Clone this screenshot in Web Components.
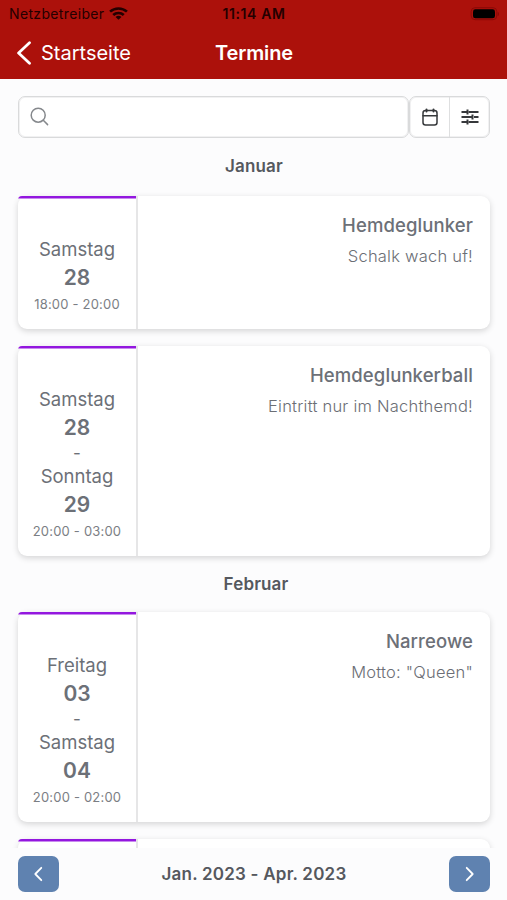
<!DOCTYPE html>
<html lang="de">
<head>
<meta charset="utf-8">
<meta name="viewport" content="width=device-width">
<title>Termine</title>
<style>
html,body{margin:0;height:100%;overflow:hidden;background:#fcfcfd}
body{font-family:Inter,"Liberation Sans",sans-serif;color:#6c7077}
</style>
</head>
<body>
<events-app></events-app>
<script>
const define=(name,html,init)=>{
  const t=document.createElement('template');t.innerHTML=html;
  customElements.define(name,class extends HTMLElement{
    constructor(){super();this.attachShadow({mode:'open'}).append(t.content.cloneNode(true));}
    connectedCallback(){if(init)init(this,this.shadowRoot);}
  });
};

define('status-bar',`<style>
:host{display:grid;grid-template-columns:1fr auto 1fr;align-items:center;height:27px;padding:0 8px 0 9px;color:#240000;font-size:14px;line-height:27px}
.left{display:flex;align-items:center;gap:5px;letter-spacing:.35px}
.time{font-weight:600;font-size:14px;letter-spacing:.6px}
.bat{justify-self:end;display:block}svg{display:block}
</style><div class="left"><span>Netzbetreiber</span>
<svg width="19" height="13" viewBox="0 0 18 13" preserveAspectRatio="none" fill="none" stroke="#240000" stroke-width="2.500"><path d="M1 4.700a11.600 11.600 0 0 1 16 0M4 8a7.300 7.300 0 0 1 10 0"/><path d="M6.200 9.900a4.200 4.200 0 0 1 5.600 0L9 12.800z" fill="#240000" stroke="none"/></svg></div>
<div class="time">11:14 AM</div>
<svg class="bat" width="29" height="14" viewBox="0 0 29 14"><rect x="1.200" y=".7" width="25.600" height="12" rx="3.800" fill="none" stroke="#8b0907" stroke-width="1"/><rect x="3" y="2.300" width="22" height="9" rx="2.400" fill="#000"/><path d="M27.800 5v4c1-.4 1.200-1.200 1.200-2s-.2-1.600-1.200-2z" fill="#8b0907"/></svg>`);

define('nav-bar',`<style>
:host{display:grid;grid-template-columns:1fr auto 1fr;align-items:center;height:52px;padding:0 16px;color:#fff;font-size:20px;line-height:52px}
.back{display:flex;align-items:center;gap:9px}
.title{font-weight:600;letter-spacing:-.15px;padding-left:1px}svg{display:block}
</style><div class="back"><svg width="16" height="24" viewBox="0 0 16 24" fill="none" stroke="#fff" stroke-width="2.800" stroke-linecap="round" stroke-linejoin="round"><path d="M13.500 1.800 2.600 12l10.900 10.200"/></svg><span><slot name="back"></slot></span></div><div class="title"><slot></slot></div>`);

define('search-row',`<style>
:host{display:flex;gap:0;height:42px;box-sizing:border-box}
.box{box-sizing:border-box;border:1px solid #d9dadb;box-shadow:inset 0 0 0 1px #f1f1f2;border-radius:7px;background:#fff;display:flex;align-items:center;height:42px}
.search{flex:1;padding-left:11px}
.tools{width:81px}
.tools span{flex:1;height:100%;display:flex;align-items:center;justify-content:center}
.tools span+span{border-left:1px solid #dedfe0}
svg{display:block}
</style><div class="box search"><svg width="20" height="20" viewBox="0 0 20 20" fill="none" stroke="#85888c" stroke-width="1.500" stroke-linecap="round"><circle cx="8.200" cy="8.200" r="7"/><path d="m13.300 13.300 4.300 4.300"/></svg></div>
<div class="box tools"><span><svg width="18" height="20" viewBox="0 0 18 20" fill="none" stroke="#36383b" stroke-width="1.500" stroke-linecap="round"><rect x="2" y="3.500" width="14" height="14.500" rx="2.500"/><path d="M2 8.700h14"/><path stroke-width="2" d="M5.500 2.500v2M12.500 2.500v2"/></svg></span>
<span><svg width="20" height="18" viewBox="0 0 20 18" fill="none" stroke="#36383b" stroke-width="1.800"><path d="M1.500 4h5.500M8.500 4H18.500M1.500 9h10.500M14 9h4.500M1.500 14h5.500M8.500 14H18.500"/><path stroke-width="2" d="M7.500 1.500v5M12.500 6.500v5M7.500 11.500v5"/></svg></span></div>`);

define('month-title',`<style>:host{display:block;text-align:center;font-size:17px;font-weight:600;line-height:24px;color:#55585e;letter-spacing:.15px}</style><slot></slot>`);

define('event-card',`<style>
:host{display:flex;flex:none;background:#fff;border-radius:9px;box-shadow:0 2px 6px rgba(0,0,0,.16)}
.date{box-sizing:border-box;width:118px;padding:40px 0 14px;text-align:center;border-radius:4px 0 0 9px;background:linear-gradient(#9317df,#9317df) 0 0/100% 2px no-repeat,linear-gradient(#c98bef,#c98bef) 0 2px/100% 1px no-repeat}
.line{width:2px;background:#e6e6e7}
.day{font-size:18.500px;line-height:27px}
.num{font-size:21px;line-height:30px;font-weight:600}
.dash{font-size:17px;line-height:20px}
.time{font-size:13px;line-height:22px;color:#7b7e84;letter-spacing:.2px}
.info{flex:1;padding:16px 17px 0 0;text-align:right}
.name{font-size:18.500px;line-height:27px;font-weight:500;letter-spacing:.1px}
.note{font-size:16.500px;line-height:24px;margin-top:5px;font-weight:300;color:#6b6e75;letter-spacing:.23px}
</style><div class="date"></div><div class="line"></div><div class="info"><div class="name"><slot></slot></div><div class="note"><slot name="note"></slot></div></div>`,
(el,root)=>{
  const date=root.querySelector('.date');date.replaceChildren();
  const add=(c,t)=>{const d=document.createElement('div');d.className=c;d.textContent=t;date.append(d);};
  (el.getAttribute('days')||'').split('|').forEach((p,i)=>{
    const [day,num]=p.split(' ');
    if(i)add('dash','-');
    add('day',day);add('num',num);
  });
  add('time',el.getAttribute('time'));
});

define('range-bar',`<style>
:host{display:flex;align-items:center;justify-content:space-between;height:52px;padding:0 17px 0 18px;background:#fcfcfd;font-size:17px;font-weight:600;color:#55585e;letter-spacing:.22px;position:relative}
.b{width:41px;height:36px;border-radius:7px;background:#5f82b0;display:flex;align-items:center;justify-content:center}
</style><div class="b"><svg width="10" height="16" viewBox="0 0 10 16" fill="none" stroke="#fff" stroke-width="1.800" stroke-linecap="round" stroke-linejoin="round"><path d="M7.300 1.800 1.300 8l6 6.200"/></svg></div><span><slot></slot></span><div class="b"><svg width="10" height="16" viewBox="0 0 10 16" fill="none" stroke="#fff" stroke-width="1.800" stroke-linecap="round" stroke-linejoin="round"><path d="m2.700 1.800 6 6.200-6 6.200"/></svg></div>`);

define('events-app',`<style>
:host{display:flex;flex-direction:column;height:900px;overflow:hidden}
header{background:#ac110b;height:79px;flex:none}
main{flex:1;min-height:0;overflow:hidden;display:flex;flex-direction:column;padding:17px 17px 0 18px}
month-title{padding:16px 0 18px}
event-card+event-card{margin-top:17px}
month-title.second{padding:16px 0 16px 4px}
event-card.last{margin-top:17px}
range-bar{flex:none}
</style><header><status-bar></status-bar><nav-bar><span slot="back">Startseite</span>Termine</nav-bar></header>
<main><search-row></search-row>
<month-title>Januar</month-title>
<event-card days="Samstag 28" time="18:00 - 20:00">Hemdeglunker<span slot="note">Schalk wach uf!</span></event-card>
<event-card days="Samstag 28|Sonntag 29" time="20:00 - 03:00">Hemdeglunkerball<span slot="note">Eintritt nur im Nachthemd!</span></event-card>
<month-title class="second">Februar</month-title>
<event-card days="Freitag 03|Samstag 04" time="20:00 - 02:00">Narreowe<span slot="note">Motto: "Queen"</span></event-card>
<event-card class="last" days=" " time=""></event-card>
</main>
<range-bar>Jan. 2023 - Apr. 2023</range-bar>`);
</script>
</body>
</html>
